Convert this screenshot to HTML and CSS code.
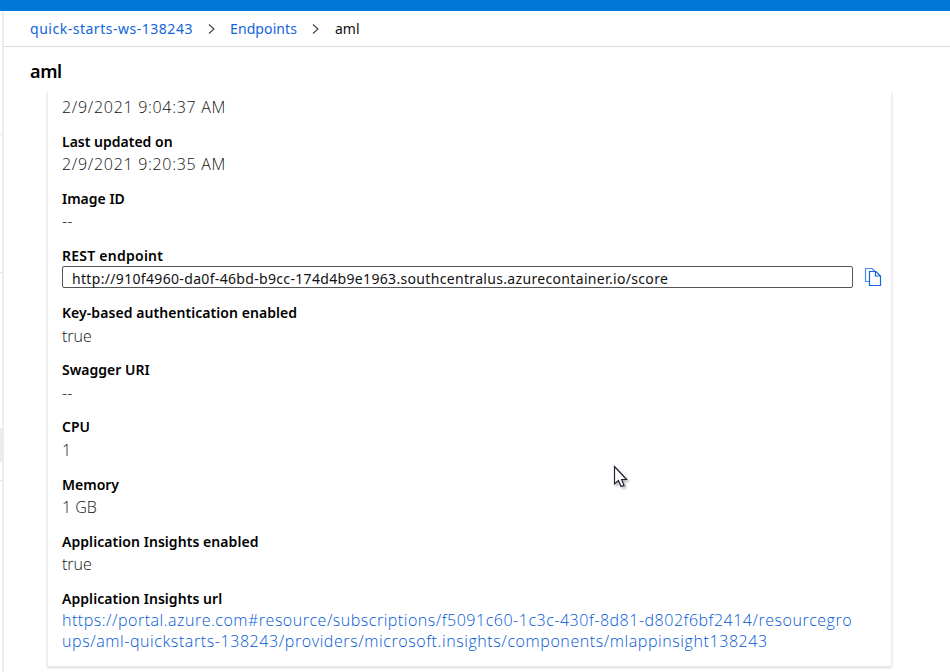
FILE: index.html
```html
<!DOCTYPE html>
<html lang="en">
<head>
<meta charset="utf-8">
<title>aml</title>
<link rel="stylesheet" href="styles.css">
</head>
<body>
<div class="app">
  <header class="topbar"></header>
  <div class="shell">
    <aside class="rail">
      <i class="rule rule-first"></i>
      <i class="rule rule-second"></i>
      <i class="selected"></i>
      <i class="rule rule-third"></i>
    </aside>
    <main class="main">
      <nav class="crumbs">
        <a class="crumb-ws">quick-starts-ws-138243</a>
        <svg class="chevron" width="8" height="12" viewBox="0 0 8 12"><path d="M1 1.5 6 6 1 10.5"/></svg>
        <a class="crumb-ep">Endpoints</a>
        <svg class="chevron" width="8" height="12" viewBox="0 0 8 12"><path d="M1 1.5 6 6 1 10.5"/></svg>
        <span class="crumb-here">aml</span>
      </nav>
      <h1 class="title">aml</h1>
      <div class="scroll">
        <dl class="card">
          <dd class="first date">2/9/2021 9:04:37 AM</dd>
          <div class="item"><dt>Last updated on</dt><dd class="date">2/9/2021 9:20:35 AM</dd></div>
          <div class="item"><dt>Image ID</dt><dd>--</dd></div>
          <div class="item"><dt class="rest">REST endpoint</dt>
            <dd class="copy-row">
              <span class="field">http://910f4960-da0f-46bd-b9cc-174d4b9e1963.southcentralus.azurecontainer.io/score</span>
              <svg class="copy" width="18" height="20" viewBox="0 0 18 20"><path class="back" d="M5.5 14.5H1.5V1.5H8L11 4.5"/><path d="M5.5 4.5H12L16.5 9V18.5H5.5ZM11.5 4.5V9H16.5"/></svg>
            </dd>
          </div>
          <div class="item"><dt class="key">Key-based authentication enabled</dt><dd>true</dd></div>
          <div class="item"><dt>Swagger URI</dt><dd>--</dd></div>
          <div class="item"><dt>CPU</dt><dd>1</dd></div>
          <div class="item"><dt>Memory</dt><dd>1 GB</dd></div>
          <div class="item"><dt class="ins">Application Insights enabled</dt><dd>true</dd></div>
          <div class="item"><dt class="url">Application Insights url</dt>
            <dd class="link"><a class="line-a">https://portal.azure.com#resource/subscriptions/f5091c60-1c3c-430f-8d81-d802f6bf2414/resourcegro</a><a class="line-b">ups/aml-quickstarts-138243/providers/microsoft.insights/components/mlappinsight138243</a></dd>
          </div>
        </dl>
      </div>
    </main>
  </div>
  <svg class="cursor" width="22" height="28" viewBox="0 0 22 28"><path d="M2.5 1.5V19L6.5 15.5L9 21.5L12 20.3L9.7 14.5H14.5Z"/></svg>
</div>
</body>
</html>
```
FILE: styles.css
```css
* { box-sizing: border-box; }
body { margin: 0; background: #fff; font-family: "Noto Sans", "Open Sans", sans-serif; color: #111; }
.app { position: relative; width: 950px; height: 672px; overflow: hidden; display: flex; flex-direction: column; }
.topbar { height: 11px; background: #0078d7; flex: none; }
.shell { display: flex; flex: 1; min-height: 0; }
.rail { width: 4px; border-right: 2px solid #edebf0; display: flex; flex-direction: column; }
.rule { height: 1px; background: #e8e5e9; }
.rule-first { margin-top: 123px; }
.rule-second { margin-top: 137px; }
.selected { height: 34px; margin-top: 155px; background: #edebed; }
.rule-third { margin-top: 18px; }
.main { flex: 1; min-width: 0; display: flex; flex-direction: column; }
.crumbs { height: 36px; flex: none; border-bottom: 1px solid #dddce0; padding-left: 26px; display: flex; align-items: center; font-size: 14px; line-height: 20px; white-space: nowrap; }
.crumbs a { color: #0f65dc; }
.crumb-ws { width: 163px; letter-spacing: 0.52px; }
.crumb-ep { width: 67px; letter-spacing: 0.1px; }
.crumb-here { padding-left: 1px; }
.chevron { fill: none; stroke: #444; stroke-width: 1.1; margin: 0 14px 0 15px; flex: none; }
.title { margin: 0; height: 45px; flex: none; padding: 11px 0 0 26px; font-size: 18px; line-height: 26px; font-weight: 600; letter-spacing: -0.4px; color: #000; }
.scroll { flex: 1; min-height: 0; overflow: hidden; padding: 0 0 5px 43px; }
.card { margin: 0; width: 845px; height: 575px; padding: 4px 0 0 14px; border: 1px solid #edebef; border-width: 0 1px 1px; box-shadow: 0 1px 2px #d9d7de; }
.item { height: 57.1px; display: flex; flex-direction: column; }
dt { height: 21.4px; flex: none; font-size: 14px; line-height: 20px; font-weight: 600; color: #000; white-space: nowrap; }
.rest { letter-spacing: 0.25px; height: 22px; }
.key { letter-spacing: 0.06px; }
.ins, .url { letter-spacing: 0.06px; }
dd { margin: 0; font-family: "Open Sans", sans-serif; font-weight: 300; font-size: 16px; line-height: 22px; color: #111; white-space: nowrap; }
.date { letter-spacing: 0.7px; }
.first { height: 36px; }
.copy-row { display: flex; align-items: center; height: 23px; margin-top: -3px; }
.field { width: 791px; height: 22px; border: 1px solid #555; border-radius: 2px; padding-left: 9px; font: 400 14px/23px "Noto Sans", sans-serif; letter-spacing: 0.33px; color: #111; }
.copy { margin-left: 11px; fill: #fff; stroke: #1267db; stroke-width: 1.2; }
.copy .back { stroke: #4a8be6; }
.link { display: flex; flex-direction: column; line-height: 21px; }
.link a { color: #0058d8; }
.line-a { letter-spacing: 0.52px; }
.line-b { letter-spacing: 0.59px; }
.cursor { position: absolute; left: 612px; top: 465px; fill: #fff; stroke: #223; stroke-width: 1.2; filter: drop-shadow(2px 2px 1px #0004); }
```
